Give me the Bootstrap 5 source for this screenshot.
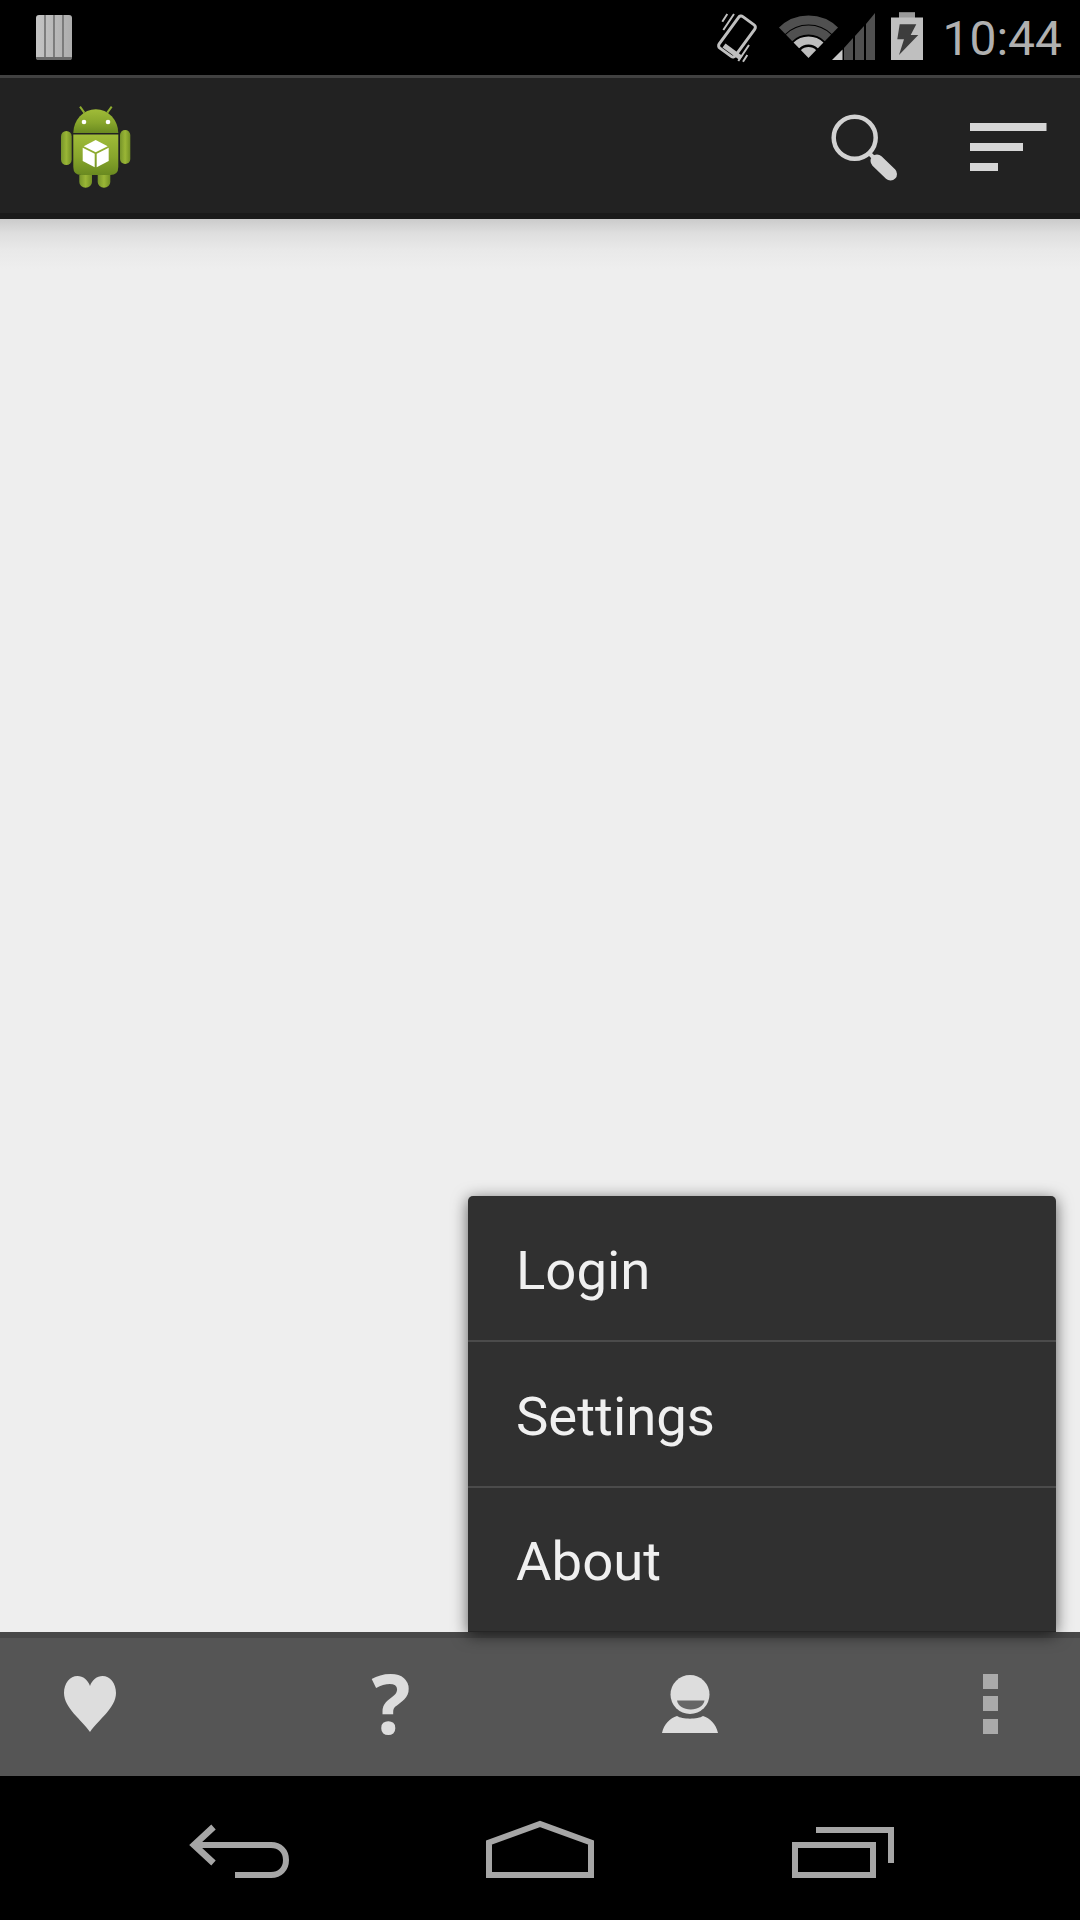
<!DOCTYPE html>
<html lang="en">
<head>
    <meta charset="UTF-8">
    <meta name="viewport" content="width=device-width, initial-scale=1.0">
    <title>Menu</title>
    <link href="https://cdn.jsdelivr.net/npm/bootstrap@5.3.0/dist/css/bootstrap.min.css" rel="stylesheet">
    <style>
        body { width: 1080px; height: 1920px; overflow: hidden; background: #000; font-family: Roboto, "Liberation Sans", sans-serif; }
        svg { display: block; }
        .status-bar { height: 75px; background: #000; padding-right: 18px; }
        .status-time { font-family: Roboto, sans-serif; font-weight: 400; font-size: 48px; line-height: 75px; color: #b0b0b0; margin-left: 3px; padding-top: 1px; }
        .action-bar { height: 144px; background: #222; border-top: 3px solid #414141; border-bottom: 6px solid #1a1a1a; }
        .page-area { background: #eee; }
        .page-shadow { height: 50px; background: linear-gradient(#cbcbcb, #dedede 28%, #e9e9e9 62%, #eee); }
        .bottom-bar { height: 144px; background: #555; border-top: 6px solid #484848; }
        .bar-btn { width: 180px; height: 138px; padding: 0; border: 0; border-radius: 0; }
        .help-mark { font-family: "Open Sans", sans-serif; font-weight: 700; font-size: 82px; line-height: 128px; padding: 0 0 10px 2px; color: #ddd; }
        .nav-bar { height: 144px; background: #000; padding: 0 150px; }
        .popup-menu { right: 24px; bottom: 288px; width: 588px; background: #303030; border-radius: 5px 5px 0 0; box-shadow: 0 3px 16px rgba(0, 0, 0, .62); z-index: 5; }
        .popup-menu .list-group-item { height: 146px; padding: 2px 48px 0; background: transparent; color: #f0f0f0; font-size: 54.5px; line-height: 144px; border: 0; border-bottom: 2px solid #4b4b4b; }
        .popup-menu .list-group-item:last-child { height: 144px; border-bottom: 1px solid #262626; line-height: 143px; }
    </style>
</head>
<body class="d-flex flex-column position-relative">
    <div class="status-bar d-flex align-items-start">
        <svg width="108" height="75" viewBox="0 0 108 75">
            <defs>
                <linearGradient id="cardGrad" x1="0" x2="1" y1="0" y2="0">
                    <stop offset="0" stop-color="#c4c4c4"/><stop offset="1" stop-color="#adadad"/>
                </linearGradient>
            </defs>
            <path d="M36 18q0-3 3-3h30q3 0 3 3v39l-1 3h-34l-1-3z" fill="url(#cardGrad)"/>
            <path d="M36 57h36l-1 3h-34z" fill="#6a6a6a"/>
            <path d="M45 15v42M54 15v42M63 15v42" stroke="#6e6e6e" stroke-width="1.6"/>
        </svg>
        <svg class="ms-auto" width="240" height="75" viewBox="700 0 240 75">
            <defs>
                <clipPath id="wifiClip"><path d="M809.500 58L764.500 11.500H854.500Z"/></clipPath>
            </defs>
            <g fill="none" stroke="#c0c0c0">
                <rect x="728" y="17" width="20" height="39" rx="3" transform="rotate(36 738 36.500)" stroke-width="3"/>
                <path d="M728.300 14L723.300 21.700M735 14L724.300 30M750 45L739.300 61M748.300 55L744 61.700" stroke-width="2"/>
                <path d="M725 45.500L742 58" stroke-width="5"/>
            </g>
            <g fill="none" clip-path="url(#wifiClip)">
                <circle cx="809.500" cy="58" r="38" stroke="#505050" stroke-width="9"/>
                <circle cx="809.500" cy="58" r="28" stroke="#505050" stroke-width="9"/>
                <circle cx="809.500" cy="58" r="17.500" stroke="#bdbdbd" stroke-width="8"/>
                <circle cx="809.500" cy="58" r="11" fill="#bdbdbd"/>
            </g>
            <path d="M833 60L843.500 49.500V60Z" fill="#c8c8c8"/>
            <path d="M845 48V60H854V38Z" fill="#505050"/>
            <path d="M856 36V60H865V26Z" fill="#505050"/>
            <path d="M867 24V60H876V13Z" fill="#505050"/>
            <path d="M900 12.500H916V17.500H924V60H892V17.500H900Z" fill="#bfbfbf"/>
            <path d="M900 12.500H916V17.500H900Z" fill="#999"/>
            <path d="M900.700 24.300H917.300L911.700 35H919.300L900 55L905 39.300H898.300Z" fill="#3d3d3d"/>
        </svg>
        <span class="status-time">10:44</span>
    </div>

    <div class="action-bar d-flex align-items-center">
        <svg width="180" height="135" viewBox="0 78 180 135">
            <defs>
                <linearGradient id="droidGrad" x1="0" x2="0" y1="0" y2="1">
                    <stop offset="0" stop-color="#a0bc38"/><stop offset=".55" stop-color="#88a62c"/><stop offset="1" stop-color="#6a8a20"/>
                </linearGradient>
                <linearGradient id="limbGrad" x1="0" x2="1" y1="0" y2="0">
                    <stop offset="0" stop-color="#76942a"/><stop offset=".5" stop-color="#9ab636"/><stop offset="1" stop-color="#728f24"/>
                </linearGradient>
            </defs>
            <path d="M80 106.700L84.300 112.700M111.700 106.700L107.300 112.700" stroke="#8fae30" stroke-width="2"/>
            <path d="M73.300 133A22.500 23.700 0 0 1 118.300 133Z" fill="url(#droidGrad)"/>
            <path d="M73.300 134.500H118.300V167q0 8-8 8H81.300q-8 0-8-8Z" fill="url(#droidGrad)"/>
            <rect x="61" y="131" width="10.700" height="34" rx="5.300" fill="url(#limbGrad)"/>
            <rect x="120" y="130" width="10.300" height="34" rx="5.100" fill="url(#limbGrad)"/>
            <path d="M79.300 175H92V182a6.300 5.700 0 0 1-12.700 0Z" fill="url(#limbGrad)"/>
            <path d="M97.700 175H110.300V182a6.300 5.700 0 0 1-12.600 0Z" fill="url(#limbGrad)"/>
            <circle cx="84" cy="122" r="2.300" fill="#fff"/>
            <circle cx="108" cy="122" r="2.300" fill="#fff"/>
            <path d="M95.700 140L107.700 146.300L95.700 152.300L83.700 146.300Z" fill="#fff"/>
            <path d="M82.700 147.800L94.700 153.800V167.200L82.700 161Z" fill="#fff"/>
            <path d="M108.700 147.800L96.700 153.800V167.200L108.700 161Z" fill="#fff"/>
        </svg>
        <svg class="ms-auto" width="120" height="135" viewBox="810 78 120 135">
            <circle cx="854.700" cy="137.700" r="21" fill="none" stroke="#d2d2d2" stroke-width="4.500"/>
            <path d="M869 153L875 159" stroke="#d2d2d2" stroke-width="4"/>
            <path d="M877 161L890.500 174" stroke="#d2d2d2" stroke-width="13" stroke-linecap="round"/>
        </svg>
        <svg width="150" height="135" viewBox="930 78 150 135">
            <path d="M970 123H1046.500V131H970ZM970 143H1023V151H970ZM970 163H998V171H970Z" fill="#d6d6d6"/>
        </svg>
    </div>

    <div class="page-area flex-grow-1">
        <div class="page-shadow"></div>
    </div>

    <div class="popup-menu position-absolute">
        <ul class="list-group list-group-flush">
            <li class="list-group-item">Login</li>
            <li class="list-group-item">Settings</li>
            <li class="list-group-item">About</li>
        </ul>
    </div>

    <div class="bottom-bar d-flex justify-content-between">
        <button class="btn bar-btn">
            <svg width="180" height="138" viewBox="0 1638 180 138">
                <path d="M90 1732C82 1720 64 1708 64 1693C64 1683 70 1676 77.500 1676C83 1676 88 1680 90 1686C92 1680 97 1676 102.500 1676C110 1676 116 1683 116 1693C116 1708 98 1720 90 1732Z" fill="#ddd"/>
            </svg>
        </button>
        <button class="btn bar-btn help-mark">?</button>
        <button class="btn bar-btn">
            <svg width="180" height="138" viewBox="600 1638 180 138">
                <circle cx="690" cy="1694.500" r="19.500" fill="#ddd"/>
                <path d="M677 1700.500H704.500C703.500 1706 698 1709.500 690.700 1709.500C683.500 1709.500 678 1706 677 1700.500Z" fill="#666"/>
                <path d="M662 1733C664 1724 670 1718 677 1716C682 1719.500 698 1719.500 703 1716C710 1718 716 1724 718 1733Z" fill="#ddd"/>
            </svg>
        </button>
        <button class="btn bar-btn">
            <svg width="180" height="138" viewBox="900 1638 180 138">
                <path d="M983 1674H998V1689H983ZM983 1696H998V1711H983ZM983 1719H998V1734H983Z" fill="#aaa"/>
            </svg>
        </button>
    </div>

    <div class="nav-bar d-flex justify-content-between">
        <svg width="180" height="144" viewBox="150 1776 180 144" fill="none" stroke="#a6a6a6" stroke-width="6">
            <path d="M193 1845H271C280 1845 286 1851 286 1860C286 1869 280 1875 271 1875H235"/>
            <path d="M213.500 1827L194 1845L213.500 1863" stroke-width="6.500"/>
        </svg>
        <svg width="180" height="144" viewBox="450 1776 180 144" fill="none" stroke="#a6a6a6" stroke-width="6">
            <path d="M489 1875V1842.500L540 1824L591 1842.500V1875Z"/>
        </svg>
        <svg width="180" height="144" viewBox="750 1776 180 144" fill="none" stroke="#a6a6a6" stroke-width="6">
            <rect x="795" y="1845" width="78" height="30"/>
            <path d="M816 1830H891V1863"/>
        </svg>
    </div>

    <script src="https://cdn.jsdelivr.net/npm/bootstrap@5.3.0/dist/js/bootstrap.bundle.min.js"></script>
</body>
</html>
